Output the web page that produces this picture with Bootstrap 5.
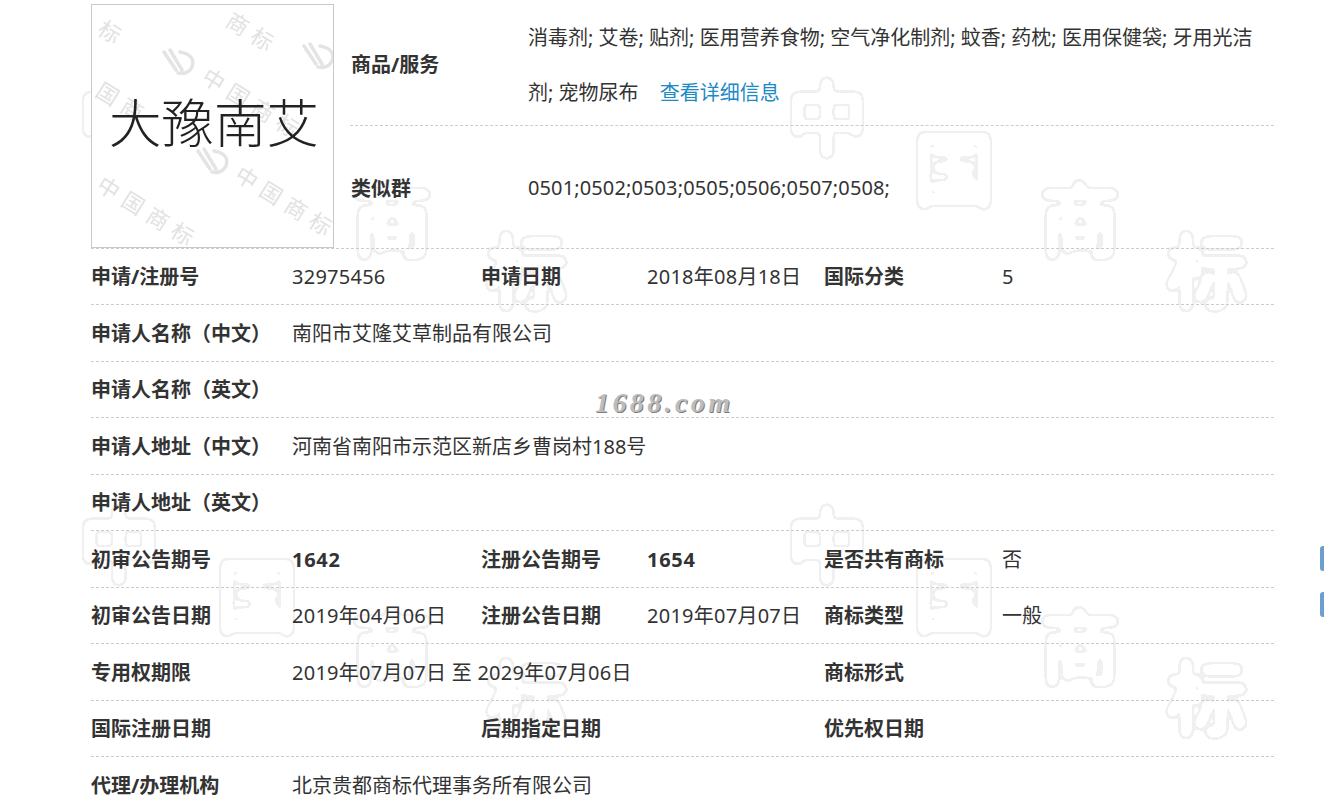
<!DOCTYPE html>
<html lang="zh-CN">
<head>
<meta charset="utf-8">
<title>商标详情</title>
<link href="https://cdn.jsdelivr.net/npm/bootstrap@5.3.0/dist/css/bootstrap.min.css" rel="stylesheet">
<style>
html, body { height: 803px; overflow: hidden; background: #fff; }
body { font-family: "Noto Sans", "Noto Sans CJK SC", sans-serif; font-size: 20px; color: #333; position: relative; }
.wm-layer { position: absolute; left: 0; top: 0; z-index: 0; }
.wm-layer text { font-family: "Noto Sans CJK SC", sans-serif; font-size: 80px; font-weight: 400; fill: #000; }
.detail-wrap { position: relative; z-index: 1; margin-left: 91px; width: 1183px; }
.top-block { height: 248.5px; border-bottom: 1px dashed #ccc; padding-top: 4px; }
.logo-box { width: 243px; height: 244px; border: 1px solid #c8c8c8; background: #fff; flex: none; }
.logo-box svg { display: block; }
.logo-word { font-family: "Noto Sans CJK SC", sans-serif; font-size: 52.5px; font-weight: 300; fill: #222; }
.logo-wm { font-family: "Noto Sans CJK SC", sans-serif; font-size: 22px; letter-spacing: 7px; fill: #e2e2e2; }
.goods-col { margin-left: 16px; margin-top: -4px; flex: 1; min-width: 0; }
.goods-row { height: 126px; padding-top: 5px; display: flex; align-items: center; border-bottom: 1px dashed #ccc; }
.goods-row + .goods-row { height: 122px; border-bottom: 0; padding-top: 3px; }
.goods-label { width: 178px; flex: none; font-weight: 700; padding-left: 1px; }
.goods-value { line-height: 55px; flex: 1; }
.goods-row + .goods-row .goods-value { letter-spacing: .12px; margin-top: -3px; }
.goods-value a { color: #1c8ac4; text-decoration: none; margin-left: 16px; }
.info-row { height: 56.5px; padding-top: 2px; border-bottom: 1px dashed #ccc; display: flex; align-items: center; white-space: nowrap; }
.lbl { font-weight: 700; }
.digits { letter-spacing: .25px; }
.digits-b { letter-spacing: .7px; }
.c1 { width: 201px; flex: none; }
.c2 { width: 189px; flex: none; }
.c3 { width: 166px; flex: none; }
.c4 { width: 177px; flex: none; }
.c5 { width: 178px; flex: none; }
.c6 { flex: 1; }
.c24 { width: 532px; flex: none; }
.stamp { position: absolute; left: 595px; top: 382px; z-index: 2; font-family: "Liberation Serif", serif; font-style: italic; font-weight: 700; font-size: 28px; letter-spacing: 3.4px; color: #bdbdbd; text-shadow: 1px 1px 0 #7d7d7d; }
.side-tab { position: absolute; right: 0; width: 4px; height: 25px; background: #6b9fcf; border-radius: 3px 0 0 3px; z-index: 2; }
.tab-a { top: 546px; }
.tab-b { top: 592px; }
</style>
</head>
<body>
<svg class="wm-layer" width="1324" height="803" aria-hidden="true">
  <defs>
    <filter id="blobLine" filterUnits="userSpaceOnUse" x="0" y="0" width="1324" height="803" color-interpolation-filters="sRGB">
      <feGaussianBlur in="SourceAlpha" stdDeviation="3.4"/>
      <feComponentTransfer>
        <feFuncA type="discrete" tableValues="0 0 1 1 1 1 1 0 0 0 0 0 0 0 0 0 0 0 0 0 0 0 0 0 0 0 0 0 0 0 0 0"/>
      </feComponentTransfer>
      <feGaussianBlur stdDeviation="0.5"/>
      <feColorMatrix type="matrix" values="0 0 0 0 0.94  0 0 0 0 0.94  0 0 0 0 0.94  0 0 0 1 0"/>
    </filter>
  </defs>
  <g filter="url(#blobLine)">
    <text x="787" y="148">中</text><text x="914" y="199">国</text><text x="1040" y="250">商</text><text x="1167" y="301">标</text>
    <text x="787" y="575">中</text><text x="914" y="626">国</text><text x="1040" y="677">商</text><text x="1167" y="728">标</text>
    <text x="79" y="148">中</text><text x="352" y="250">商</text><text x="487" y="301">标</text>
    <text x="79" y="575">中</text><text x="217" y="626">国</text><text x="352" y="677">商</text><text x="487" y="728">标</text>
  </g>
</svg>

<div class="detail-wrap">
  <div class="top-block d-flex">
    <div class="logo-box">
      <svg width="241" height="242" viewBox="0 0 241 242">
        <g>
          <text class="logo-wm" transform="translate(3 184) rotate(32)">中国商标</text>
          <text class="logo-wm" transform="translate(141 174) rotate(32)">中国商标</text>
          <text class="logo-wm" transform="translate(108 76) rotate(32)">中国商标</text>
          <text class="logo-wm" transform="translate(2 90) rotate(32)">国商</text>
          <text class="logo-wm" transform="translate(4 28) rotate(32)">标</text>
          <text class="logo-wm" transform="translate(132 20) rotate(32)">商标</text>
          <g fill="none" stroke="#e4e4e4" stroke-width="3.5" stroke-linecap="round">
            <path d="M72 47 L84 65 M78 45 L90 65 M88 47 Q104 50 100 62 Q96 70 86 68"/>
            <path d="M212 41 L224 59 M218 39 L230 59 M228 41 Q244 44 240 56 Q236 64 226 62"/>
            <path d="M106 146 L118 164 M112 144 L124 164 M122 146 Q138 149 134 161 Q130 169 120 167"/>
          </g>
        </g>
        <text class="logo-word" x="17" y="138">大豫南艾</text>
      </svg>
    </div>
    <div class="goods-col">
      <div class="goods-row">
        <div class="goods-label">商品/服务</div>
        <div class="goods-value">消毒剂; 艾卷; 贴剂; 医用营养食物; 空气净化制剂; 蚊香; 药枕; 医用保健袋; 牙用光洁剂; 宠物尿布 <a href="#">查看详细信息</a></div>
      </div>
      <div class="goods-row">
        <div class="goods-label">类似群</div>
        <div class="goods-value">0501;0502;0503;0505;0506;0507;0508;</div>
      </div>
    </div>
  </div>

  <div class="info-row"><div class="c1 lbl">申请/注册号</div><div class="c2 digits">32975456</div><div class="c3 lbl">申请日期</div><div class="c4 digits">2018年08月18日</div><div class="c5 lbl">国际分类</div><div class="c6">5</div></div>
  <div class="info-row"><div class="c1 lbl">申请人名称（中文）</div><div class="c6">南阳市艾隆艾草制品有限公司</div></div>
  <div class="info-row"><div class="c1 lbl">申请人名称（英文）</div><div class="c6"></div></div>
  <div class="info-row"><div class="c1 lbl">申请人地址（中文）</div><div class="c6">河南省南阳市示范区新店乡曹岗村188号</div></div>
  <div class="info-row"><div class="c1 lbl">申请人地址（英文）</div><div class="c6"></div></div>
  <div class="info-row"><div class="c1 lbl">初审公告期号</div><div class="c2 lbl digits-b">1642</div><div class="c3 lbl">注册公告期号</div><div class="c4 lbl digits-b">1654</div><div class="c5 lbl">是否共有商标</div><div class="c6">否</div></div>
  <div class="info-row"><div class="c1 lbl">初审公告日期</div><div class="c2 digits">2019年04月06日</div><div class="c3 lbl">注册公告日期</div><div class="c4 digits">2019年07月07日</div><div class="c5 lbl">商标类型</div><div class="c6">一般</div></div>
  <div class="info-row"><div class="c1 lbl">专用权期限</div><div class="c24 digits">2019年07月07日 至 2029年07月06日</div><div class="c5 lbl">商标形式</div><div class="c6"></div></div>
  <div class="info-row"><div class="c1 lbl">国际注册日期</div><div class="c2"></div><div class="c3 lbl">后期指定日期</div><div class="c4"></div><div class="c5 lbl">优先权日期</div><div class="c6"></div></div>
  <div class="info-row border-0"><div class="c1 lbl">代理/办理机构</div><div class="c6">北京贵都商标代理事务所有限公司</div></div>
</div>

<div class="stamp">1688.com</div>
<div class="side-tab tab-a"></div>
<div class="side-tab tab-b"></div>

<script src="https://cdn.jsdelivr.net/npm/bootstrap@5.3.0/dist/js/bootstrap.bundle.min.js"></script>
</body>
</html>
